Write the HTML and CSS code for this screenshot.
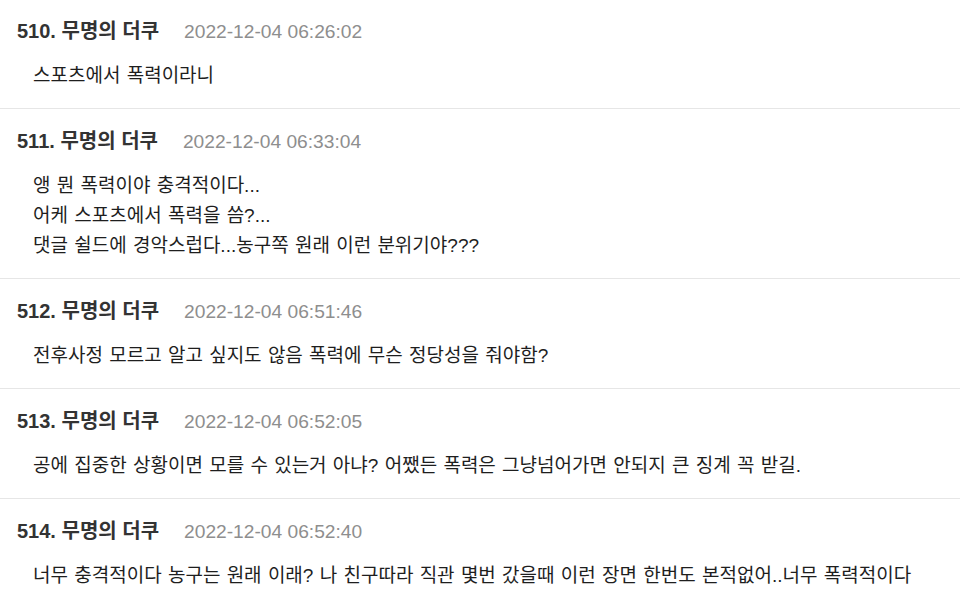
FILE: index.html
```html
<!DOCTYPE html>
<html lang="ko">
<head>
<meta charset="utf-8">
<link rel="stylesheet" href="styles.css">
</head>
<body>
<div class="list">
  <div class="comment">
    <div class="head"><span class="name">510. 무명의 더쿠</span><span class="time">2022-12-04 06:26:02</span></div>
    <div class="body">스포츠에서 폭력이라니</div>
  </div>
  <div class="comment">
    <div class="head"><span class="name">511. 무명의 더쿠</span><span class="time">2022-12-04 06:33:04</span></div>
    <div class="body">앵 뭔 폭력이야 충격적이다...<br>어케 스포츠에서 폭력을 씀?...<br>댓글 쉴드에 경악스럽다...농구쪽 원래 이런 분위기야???</div>
  </div>
  <div class="comment">
    <div class="head"><span class="name">512. 무명의 더쿠</span><span class="time">2022-12-04 06:51:46</span></div>
    <div class="body">전후사정 모르고 알고 싶지도 않음 폭력에 무슨 정당성을 줘야함?</div>
  </div>
  <div class="comment">
    <div class="head"><span class="name">513. 무명의 더쿠</span><span class="time">2022-12-04 06:52:05</span></div>
    <div class="body">공에 집중한 상황이면 모를 수 있는거 아냐? 어쨌든 폭력은 그냥넘어가면 안되지 큰 징계 꼭 받길.</div>
  </div>
  <div class="comment">
    <div class="head"><span class="name">514. 무명의 더쿠</span><span class="time">2022-12-04 06:52:40</span></div>
    <div class="body">너무 충격적이다 농구는 원래 이래? 나 친구따라 직관 몇번 갔을때 이런 장면 한번도 본적없어..너무 폭력적이다</div>
  </div>
</div>
</body>
</html>
```

FILE: styles.css
```css
html, body {
  margin: 0;
  padding: 0;
  background: #ffffff;
}
body {
  font-family: "Liberation Sans", "Noto Sans CJK KR", sans-serif;
  color: #222222;
}
.list {
  display: flex;
  flex-direction: column;
}
.comment {
  padding: 20px 17px 17px 17px;
  border-bottom: 1px solid #e6e6e6;
}
.comment:first-child {
  padding-top: 19px;
}
.head {
  display: flex;
  align-items: baseline;
  gap: 25px;
  line-height: 24px;
  height: 24px;
}
.name {
  font-size: 20px;
  font-weight: bold;
  color: #333333;
}
.time {
  font-size: 19.2px;
  color: #8e8e8e;
}
.body {
  margin-top: 18px;
  padding-left: 16px;
  font-size: 19px;
  line-height: 30px;
  word-spacing: 1px;
  color: #1e1e1e;
}
```
